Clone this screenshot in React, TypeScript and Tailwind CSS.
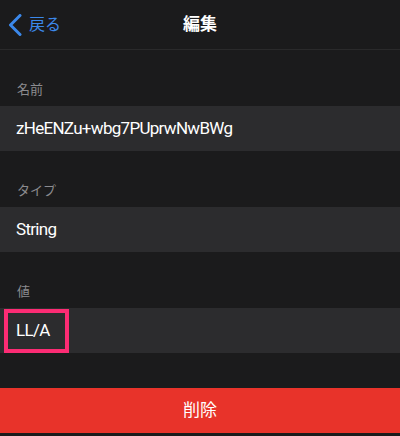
const font = { fontFamily: 'Roboto, "Noto Sans CJK JP", sans-serif' }

function Section({ label, value, highlight }: { label: string; value: string; highlight?: boolean }) {
	return (
		<div>
			<div className="h-14 flex items-end px-[17px] pb-[7px]">
				<span className="text-[13px] text-[#8b8b8f]">{label}</span>
			</div>
			<div className="relative h-[45px] bg-[#2c2c2e] flex items-center px-4">
				<span className="text-[17px] tracking-[-0.7px] text-white">{value}</span>
				{highlight && (
					<div className="absolute left-[4px] top-[1px] w-[65px] h-[44px] border-4 border-[#fc2c74]" />
				)}
			</div>
		</div>
	)
}

export default function App() {
	return (
		<div className="w-[400px] h-[436px] bg-[#1b1b1c] overflow-hidden" style={font}>
			{/* Nav */}
			<div className="relative h-[50px] border-b border-[#2a2a2b] flex items-center justify-center">
				<div className="absolute left-[8px] top-0 h-full flex items-center gap-[7px] text-[#3b88ea]">
					<svg width="14" height="22" viewBox="0 0 14 22" fill="none">
						<path d="M12 1.5 L2.5 11 L12 20.5" stroke="currentColor" strokeWidth="3" strokeLinecap="round" strokeLinejoin="round" />
					</svg>
					<span className="text-[16px]">戻る</span>
				</div>
				<span className="text-[17px] font-bold text-white">編集</span>
			</div>

			<Section label="名前" value="zHeENZu+wbg7PUprwNwBWg" />
			<Section label="タイプ" value="String" />
			<Section label="値" value="LL/A" highlight />

			<div className="h-[35px]" />
			<button className="w-full h-[45px] bg-[#e8332a] text-white text-[17px] flex items-center justify-center">
				削除
			</button>
		</div>
	)
}
